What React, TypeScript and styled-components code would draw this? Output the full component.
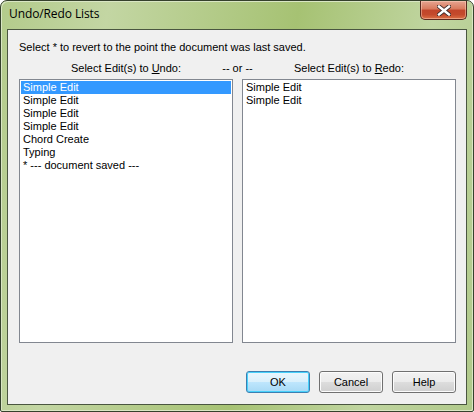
import React from "react";
import styled, { createGlobalStyle } from "styled-components";

const Global = createGlobalStyle`
  html, body { margin: 0; padding: 0; background: #ffffff; }
  body { width: 474px; height: 412px; overflow: hidden; }
`;

const Window = styled.div`
  box-sizing: border-box;
  width: 474px;
  height: 412px;
  display: flex;
  flex-direction: column;
  border: 1px solid #35412c;
  border-radius: 7px 7px 2px 2px;
  padding: 0 6px 6px 6px;
  background: linear-gradient(100deg, #b3cb8b 0%, #c3d6a3 20%, #a6c273 55%, #c0d5a0 80%, #b0c98a 100%);
  box-shadow: inset 1px 1px 0 #d9e6c4, inset -1px -1px 0 #d9e6c4;
`;

const TitleBar = styled.div`
  height: 28px;
  display: flex;
  align-items: flex-start;
  justify-content: space-between;
`;

const Title = styled.div`
  font-family: "Open Sans", "Noto Sans", sans-serif;
  font-size: 12px;
  color: #000;
  padding: 5px 0 0 2px;
  line-height: 16px;
  letter-spacing: -0.1px;
`;

const CloseButton = styled.div`
  box-sizing: border-box;
  width: 47px;
  height: 19px;
  display: flex;
  align-items: center;
  justify-content: center;
  border: 1px solid #5a2a20;
  border-top: none;
  border-radius: 0 0 5px 5px;
  background: linear-gradient(#e6a591 0%, #d8795c 45%, #c1452a 50%, #c44a2c 75%, #dc7046 100%);
  box-shadow: inset 0 0 0 1px rgba(255, 220, 200, 0.45);
`;

const Client = styled.div`
  flex: 1;
  display: flex;
  flex-direction: column;
  border: 1px solid #4a5640;
  background: #f0f0f0;
  padding: 0 10px 11px 11px;
  font-family: "Liberation Sans", Arial, sans-serif;
  font-size: 11px;
  color: #000;
`;

const Instruction = styled.div`
  margin-top: 11px;
  line-height: 13px;
`;

const LabelRow = styled.div`
  display: flex;
  margin-top: 8px;
  line-height: 13px;
  height: 13px;
`;

const Label = styled.div<{ $w: number }>`
  width: ${(p) => p.$w}px;
  flex: none;
  display: flex;
  justify-content: center;
  white-space: nowrap;
`;

const Lists = styled.div`
  display: flex;
  gap: 9px;
  margin-top: 4px;
`;

const ListBox = styled.div`
  box-sizing: border-box;
  width: 214px;
  height: 264px;
  border: 1px solid #828790;
  background: #ffffff;
  padding: 1px;
`;

const Item = styled.div<{ $selected?: boolean }>`
  height: 13px;
  line-height: 13px;
  padding-left: 2px;
  white-space: nowrap;
  background: ${(p) => (p.$selected ? "#3399ff" : "transparent")};
  color: ${(p) => (p.$selected ? "#ffffff" : "#000000")};
`;

const Buttons = styled.div`
  margin-top: auto;
  display: flex;
  justify-content: flex-end;
  gap: 9px;
`;

const Button = styled.div<{ $default?: boolean }>`
  box-sizing: border-box;
  width: 64px;
  height: 22px;
  display: flex;
  align-items: center;
  justify-content: center;
  border-radius: 3px;
  border: 1px solid ${(p) => (p.$default ? "#3c7fb1" : "#707070")};
  background: ${(p) =>
    p.$default
      ? "linear-gradient(#eaf6fd 0%, #d9f0fc 50%, #bee6fd 51%, #a7d9f5 100%)"
      : "linear-gradient(#f2f2f2 0%, #ebebeb 50%, #dddddd 51%, #cfcfcf 100%)"};
  box-shadow: inset 0 0 0 1px ${(p) => (p.$default ? "#48d1fb" : "#fcfcfc")};
  color: #000;
`;

const U = styled.span`
  text-decoration: underline;
`;

const undoItems = [
  "Simple Edit",
  "Simple Edit",
  "Simple Edit",
  "Simple Edit",
  "Chord Create",
  "Typing",
  "* --- document saved ---",
];
const redoItems = ["Simple Edit", "Simple Edit"];

export default function App() {
  return (
    <>
      <Global />
      <Window>
        <TitleBar>
          <Title>Undo/Redo Lists</Title>
          <CloseButton>
            <svg width="14" height="11" viewBox="0 0 14 11">
              <path d="M2 1.5 L12 9.5 M12 1.5 L2 9.5" stroke="#3b2a28" strokeWidth="4.2" strokeLinecap="square" />
              <path d="M2 1.5 L12 9.5 M12 1.5 L2 9.5" stroke="#ffffff" strokeWidth="2.4" strokeLinecap="square" />
            </svg>
          </CloseButton>
        </TitleBar>
        <Client>
          <Instruction>Select * to revert to the point the document was last saved.</Instruction>
          <LabelRow>
            <Label $w={214}>
              <span>
                Select Edit(s) to <U>U</U>ndo:
              </span>
            </Label>
            <Label $w={9}>-- or --</Label>
            <Label $w={214}>
              <span>
                Select Edit(s) to <U>R</U>edo:
              </span>
            </Label>
          </LabelRow>
          <Lists>
            <ListBox>
              {undoItems.map((t, i) => (
                <Item key={i} $selected={i === 0}>
                  {t}
                </Item>
              ))}
            </ListBox>
            <ListBox>
              {redoItems.map((t, i) => (
                <Item key={i}>{t}</Item>
              ))}
            </ListBox>
          </Lists>
          <Buttons>
            <Button $default>OK</Button>
            <Button>Cancel</Button>
            <Button>Help</Button>
          </Buttons>
        </Client>
      </Window>
    </>
  );
}
